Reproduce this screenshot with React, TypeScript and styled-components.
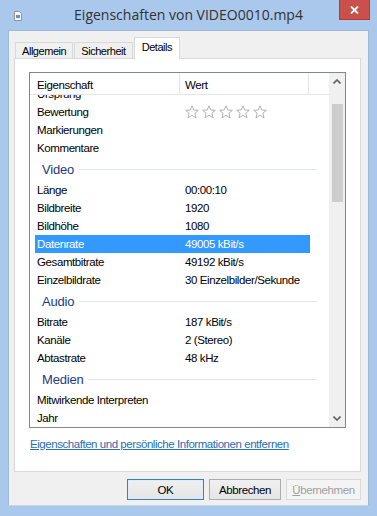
import styled, { createGlobalStyle } from 'styled-components';

const GlobalStyle = createGlobalStyle`
	html, body {
		margin: 0;
		padding: 0;
		background: #a9c8ec;
	}
	* {
		box-sizing: border-box;
	}
`;

const UI_FONT = `"Liberation Sans", Arial, sans-serif`;

const Window = styled.div`
	width: 377px;
	height: 516px;
	background: #a9c8ec;
	display: flex;
	flex-direction: column;
	font-family: ${UI_FONT};
	font-size: 11.5px;
	letter-spacing: -0.4px;
	color: #000;
	overflow: hidden;
`;

const TitleBar = styled.div`
	height: 30px;
	display: grid;
	grid-template-columns: 1fr auto 1fr;
	align-items: start;
`;

const TitleIcon = styled.div`
	padding: 11px 0 0 13px;
	height: 30px;
`;

const Title = styled.div`
	font-family: "Open Sans", "Noto Sans", sans-serif;
	font-size: 14px;
	letter-spacing: 0;
	line-height: 30px;
	color: #333;
	white-space: nowrap;
`;

const CloseButton = styled.div`
	justify-self: end;
	margin-right: 7px;
	width: 31px;
	height: 20px;
	background: #c9504b;
	border: 1px solid #b03d38;
	border-top: none;
	display: flex;
	align-items: center;
	justify-content: center;
`;

const Body = styled.div`
	margin: 0 8px;
	height: 476px;
	background: #f0f0f0;
	border: 1px solid #9fb9d8;
	border-bottom-color: #c5d6ea;
	display: flex;
	flex-direction: column;
	padding: 6px 7px 0 5px;
`;

const TabRow = styled.div`
	display: flex;
	align-items: flex-end;
	padding-left: 1px;
	height: 22px;
	position: relative;
	z-index: 1;
`;

const Tab = styled.div<{ $active?: boolean }>`
	height: ${p => (p.$active ? '22px' : '17px')};
	line-height: ${p => (p.$active ? '19px' : '16px')};
	padding: 0 ${p => (p.$active ? '7px' : '6px')};
	font-size: 11px;
	letter-spacing: -0.45px;
	background: ${p => (p.$active ? '#fff' : '#f0f0f0')};
	border: 1px solid #d9d9d9;
	border-bottom: ${p => (p.$active ? 'none' : '1px solid #d9d9d9')};
	margin-right: ${p => (p.$active ? '0' : '1px')};
	color: #000;
`;

const Panel = styled.div`
	margin-top: -1px;
	height: 414px;
	background: #fff;
	border: 1px solid #d9d9d9;
	padding: 13px 14px 0 14px;
	display: flex;
	flex-direction: column;
`;

const ListBox = styled.div`
	height: 356px;
	border: 1px solid #828790;
	display: flex;
`;

const ListMain = styled.div`
	flex: 1;
	display: flex;
	flex-direction: column;
	min-width: 0;
`;

const Header = styled.div`
	height: 22px;
	display: flex;
	border-bottom: 1px solid #e5e5e5;
`;

const HeaderCell = styled.div<{ $width?: number }>`
	width: ${p => (p.$width ? `${p.$width}px` : 'auto')};
	flex: ${p => (p.$width ? 'none' : '1')};
	padding-left: ${p => (p.$width === 150 ? '7px' : '5px')};
	padding-top: 1px;
	line-height: 22px;
	border-right: ${p => (p.$width ? '1px solid #e5e5e5' : 'none')};
`;

const Viewport = styled.div`
	flex: 1;
	overflow: hidden;
`;

const Scrolled = styled.div`
	margin-top: -10px;
`;

const Row = styled.div<{ $selected?: boolean }>`
	margin-left: 5px;
	width: 275px;
	height: 18px;
	display: grid;
	grid-template-columns: 148px 1fr;
	align-items: center;
	padding-left: 2px;
	white-space: nowrap;
	background: ${p => (p.$selected ? '#3399ff' : 'transparent')};
	color: ${p => (p.$selected ? '#fff' : '#000')};
`;

const Group = styled.div`
	height: 24px;
	display: flex;
	align-items: center;
	padding-left: 12px;
	width: 287px;
	gap: 5px;
	font-size: 13px;
	letter-spacing: -0.2px;
	color: #1e3a80;
	&::after {
		content: '';
		flex: 1;
		height: 1px;
		background: #e2e6ee;
	}
`;

const Stars = styled.div`
	display: flex;
	gap: 3px;
	height: 14px;
`;

const ScrollBar = styled.div`
	width: 16px;
	background: #f0f0f0;
	display: flex;
	flex-direction: column;
	align-items: center;
`;

const ArrowButton = styled.div`
	height: 17px;
	width: 16px;
	display: flex;
	align-items: center;
	justify-content: center;
`;

const Track = styled.div`
	flex: 1;
	width: 100%;
	padding: 14px 2px 0 3px;
`;

const Thumb = styled.div`
	height: 98px;
	background: #cdcdcd;
`;

const LinkRow = styled.div`
	margin-top: 10px;
	padding-left: 1px;
`;

const Link = styled.a`
	color: #2a6db0;
	text-decoration: underline;
	letter-spacing: -0.45px;
`;

const ButtonRow = styled.div`
	display: flex;
	justify-content: flex-end;
	gap: 5px;
	margin-top: 7px;
`;

const Button = styled.div<{ $width: number; $default?: boolean; $disabled?: boolean }>`
	width: ${p => p.$width}px;
	height: 21px;
	display: flex;
	align-items: center;
	justify-content: center;
	border: 1px solid ${p => (p.$default ? '#3c7fb1' : p.$disabled ? '#d9d9d9' : '#acacac')};
	background: ${p => (p.$disabled ? '#f4f4f4' : 'linear-gradient(#f0f0f0, #e5e5e5)')};
	color: ${p => (p.$disabled ? '#a0a0a0' : '#000')};
	box-shadow: ${p => (p.$default ? 'inset 0 0 0 1px #dcecfc' : 'none')};
`;

const StarIcon = () => (
	<svg width="14" height="14" viewBox="0 0 14 14">
		<path
			d="M7 0.8 L8.8 5 L13.3 5.3 L9.9 8.2 L11 12.8 L7 10.3 L3 12.8 L4.1 8.2 L0.7 5.3 L5.2 5 Z"
			fill="#fff"
			stroke="#a8a8a8"
			strokeWidth="0.9"
			strokeLinejoin="round"
		/>
	</svg>
);

const FileIcon = () => (
	<svg width="10" height="10" viewBox="0 0 10 10">
		<path d="M1.5 0.5 H6.5 L8.5 2.5 V9.5 H1.5 Z" fill="#f4f6f8" stroke="#8c97a6" strokeWidth="1" />
		<rect x="3" y="4" width="4" height="3" fill="#6f8fb8" />
	</svg>
);

const Chevron = ({ up }: { up?: boolean }) => (
	<svg width="8" height="5" viewBox="0 0 8 5">
		<path d={up ? 'M0.5 4.5 L4 1 L7.5 4.5' : 'M0.5 0.5 L4 4 L7.5 0.5'} fill="none" stroke="#606060" strokeWidth="1.6" />
	</svg>
);

type Entry = { name: string; value?: string; stars?: boolean; selected?: boolean } | { group: string };

const entries: Entry[] = [
	{ name: 'Ursprung' },
	{ name: 'Bewertung', stars: true },
	{ name: 'Markierungen' },
	{ name: 'Kommentare' },
	{ group: 'Video' },
	{ name: 'Länge', value: '00:00:10' },
	{ name: 'Bildbreite', value: '1920' },
	{ name: 'Bildhöhe', value: '1080' },
	{ name: 'Datenrate', value: '49005 kBit/s', selected: true },
	{ name: 'Gesamtbitrate', value: '49192 kBit/s' },
	{ name: 'Einzelbildrate', value: '30 Einzelbilder/Sekunde' },
	{ group: 'Audio' },
	{ name: 'Bitrate', value: '187 kBit/s' },
	{ name: 'Kanäle', value: '2 (Stereo)' },
	{ name: 'Abtastrate', value: '48 kHz' },
	{ group: 'Medien' },
	{ name: 'Mitwirkende Interpreten' },
	{ name: 'Jahr' },
];

const App = () => {
	return (
		<>
			<GlobalStyle />
			<Window>
				<TitleBar>
					<TitleIcon>
						<FileIcon />
					</TitleIcon>
					<Title>Eigenschaften von VIDEO0010.mp4</Title>
					<CloseButton>
						<svg width="9" height="8" viewBox="0 0 9 8">
							<path d="M1 0.5 L8 7.5 M8 0.5 L1 7.5" stroke="#fff" strokeWidth="1.8" />
						</svg>
					</CloseButton>
				</TitleBar>
				<Body>
					<TabRow>
						<Tab>Allgemein</Tab>
						<Tab>Sicherheit</Tab>
						<Tab $active>Details</Tab>
					</TabRow>
					<Panel>
						<ListBox>
							<ListMain>
								<Header>
									<HeaderCell $width={150}>Eigenschaft</HeaderCell>
									<HeaderCell $width={129}>Wert</HeaderCell>
									<HeaderCell />
								</Header>
								<Viewport>
									<Scrolled>
										{entries.map((e, i) =>
											'group' in e ? (
												<Group key={i}>{e.group}</Group>
											) : (
												<Row key={i} $selected={e.selected}>
													<span>{e.name}</span>
													{e.stars ? (
														<Stars>
															{[0, 1, 2, 3, 4].map(s => (
																<StarIcon key={s} />
															))}
														</Stars>
													) : (
														<span>{e.value}</span>
													)}
												</Row>
											)
										)}
									</Scrolled>
								</Viewport>
							</ListMain>
							<ScrollBar>
								<ArrowButton>
									<Chevron up />
								</ArrowButton>
								<Track>
									<Thumb />
								</Track>
								<ArrowButton>
									<Chevron />
								</ArrowButton>
							</ScrollBar>
						</ListBox>
						<LinkRow>
							<Link href="#">Eigenschaften und persönliche Informationen entfernen</Link>
						</LinkRow>
					</Panel>
					<ButtonRow>
						<Button $width={77} $default>OK</Button>
						<Button $width={72}>Abbrechen</Button>
						<Button $width={75} $disabled>
							<span>
								<u>Ü</u>bernehmen
							</span>
						</Button>
					</ButtonRow>
				</Body>
			</Window>
		</>
	);
};

export default App;
